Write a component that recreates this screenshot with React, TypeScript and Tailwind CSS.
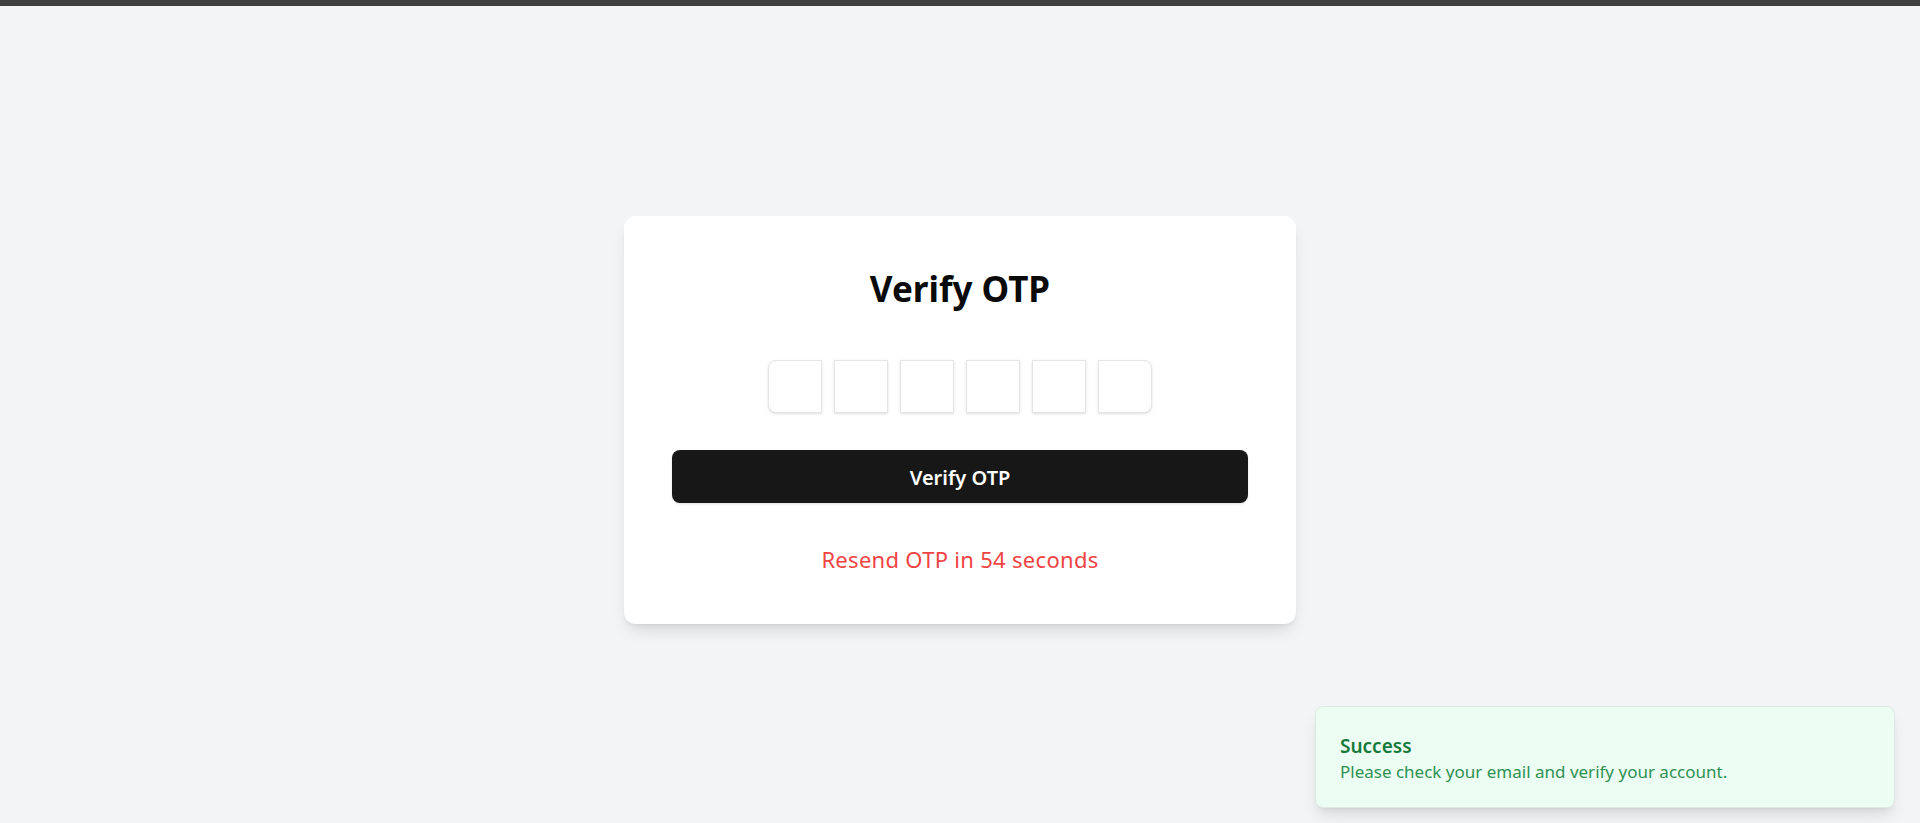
import React from "react";

export default function App() {
  const font = { fontFamily: '"Noto Sans", "Open Sans", sans-serif' };
  return (
    <div className="relative w-[1920px] h-[823px] overflow-hidden bg-[#f3f4f6]" style={font}>
      <div className="h-[6px] bg-[#3f3f3f]" />
      <div className="flex justify-center pt-[210px]">
        <div className="w-[672px] bg-white rounded-xl shadow-lg px-12 pt-[51px] pb-[51px] flex flex-col items-center">
          <h1 className="h-[44px] leading-[44px] text-[35px] font-bold text-[#0a0a0a]">Verify OTP</h1>
          <div className="mt-[49px] flex gap-[12px]">
            {[0, 1, 2, 3, 4, 5].map((i) => (
              <input
                key={i}
                maxLength={1}
                className={
                  "w-[54px] h-[53px] border border-[#e5e5e5] bg-white shadow-sm text-center outline-none " +
                  (i === 0 ? "rounded-l-lg" : "") +
                  (i === 5 ? "rounded-r-lg" : "")
                }
              />
            ))}
          </div>
          <button className="mt-[37px] w-full h-[53px] rounded-lg bg-[#171717] text-white text-[20px] font-semibold flex items-center justify-center shadow-sm">
            <span className="translate-y-[1px]">Verify OTP</span>
          </button>
          <p className="mt-[42px] h-[28px] leading-[28px] text-[22px] text-[#ef4444] tracking-[0.3px]">Resend OTP in 54 seconds</p>
        </div>
      </div>
      <div className="absolute right-[25px] bottom-[15px] w-[580px] h-[102px] rounded-lg border border-[#dfe9e3] bg-[#ecfdf3] shadow-lg px-6 pt-[4px] flex flex-col justify-center">
        <div className="text-[19px] leading-[26px] font-semibold text-[#157a3a]">Success</div>
        <div className="text-[17px] leading-[26px] text-[#2f9152]">Please check your email and verify your account.</div>
      </div>
    </div>
  );
}
